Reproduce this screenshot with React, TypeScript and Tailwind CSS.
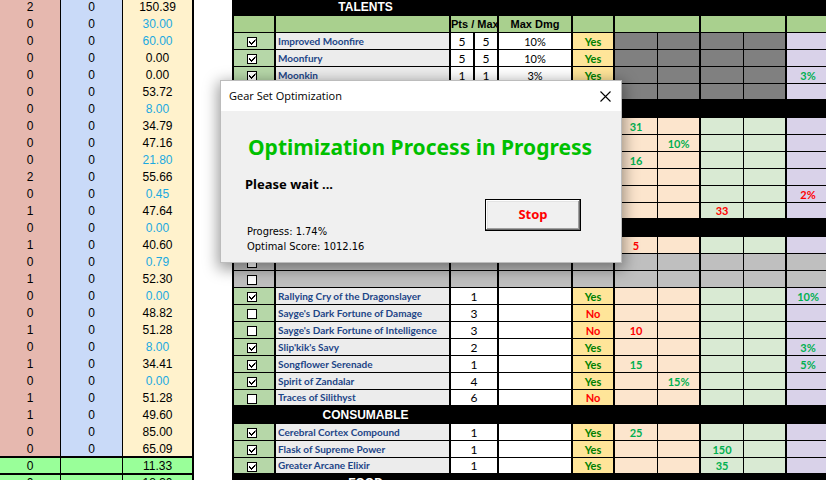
import { useId } from "react";
import { clsx } from "clsx";

type Tone = "good" | "bad";
type Mark = { col: number; text: string; tone: Tone };
type Row = {
  name?: string;
  checked?: boolean;
  pts?: string;
  max?: string;
  dmg?: string;
  on?: "Yes" | "No";
  marks?: Mark[];
  empty?: boolean;
};
type Section = { title: string; header?: boolean; split?: boolean; locked?: boolean; rows: Row[] };

const good = (col: number, text: string): Mark => ({ col, text, tone: "good" });
const bad = (col: number, text: string): Mark => ({ col, text, tone: "bad" });

const SCORES: [string, string, boolean?][] = [
  ["2", "150.39"],
  ["0", "30.00", true],
  ["0", "60.00", true],
  ["0", "0.00"],
  ["0", "0.00"],
  ["0", "53.72"],
  ["0", "8.00", true],
  ["0", "34.79"],
  ["0", "47.16"],
  ["0", "21.80", true],
  ["2", "55.66"],
  ["0", "0.45", true],
  ["1", "47.64"],
  ["0", "0.00", true],
  ["1", "40.60"],
  ["0", "0.79", true],
  ["1", "52.30"],
  ["0", "0.00", true],
  ["0", "48.82"],
  ["1", "51.28"],
  ["0", "8.00", true],
  ["1", "34.41"],
  ["0", "0.00", true],
  ["1", "51.28"],
  ["1", "49.60"],
  ["0", "85.00"],
  ["0", "65.09"],
];

const TOTALS: [string, string][] = [
  ["0", "11.33"],
  ["0", "18.30"],
];

const SECTIONS: Section[] = [
  {
    title: "TALENTS",
    header: true,
    split: true,
    locked: true,
    rows: [
      { name: "Improved Moonfire", checked: true, pts: "5", max: "5", dmg: "10%", on: "Yes" },
      { name: "Moonfury", checked: true, pts: "5", max: "5", dmg: "10%", on: "Yes" },
      { name: "Moonkin", checked: true, pts: "1", max: "1", dmg: "3%", on: "Yes", marks: [good(4, "3%")] },
      {},
    ],
  },
  {
    title: "",
    rows: [
      { marks: [good(0, "31")] },
      { marks: [good(1, "10%")] },
      { marks: [good(0, "16")] },
      {},
      { marks: [bad(4, "2%")] },
      { marks: [bad(2, "33")] },
    ],
  },
  {
    title: "",
    rows: [
      { marks: [bad(0, "5")] },
      { empty: true },
      { empty: true },
      { name: "Rallying Cry of the Dragonslayer", checked: true, max: "1", on: "Yes", marks: [good(4, "10%")] },
      { name: "Sayge's Dark Fortune of Damage", max: "3", on: "No" },
      { name: "Sayge's Dark Fortune of Intelligence", max: "3", on: "No", marks: [bad(0, "10")] },
      { name: "Slip'kik's Savy", checked: true, max: "2", on: "Yes", marks: [good(4, "3%")] },
      { name: "Songflower Serenade", checked: true, max: "1", on: "Yes", marks: [good(0, "15"), good(4, "5%")] },
      { name: "Spirit of Zandalar", checked: true, max: "4", on: "Yes", marks: [good(1, "15%")] },
      { name: "Traces of Silithyst", max: "6", on: "No" },
    ],
  },
  {
    title: "CONSUMABLE",
    rows: [
      { name: "Cerebral Cortex Compound", checked: true, max: "1", on: "Yes", marks: [good(0, "25")] },
      { name: "Flask of Supreme Power", checked: true, max: "1", on: "Yes", marks: [good(2, "150")] },
      { name: "Greater Arcane Elixir", checked: true, max: "1", on: "Yes", marks: [good(2, "35")] },
    ],
  },
  { title: "FOOD", rows: [] },
];

const MARK_COLUMNS = [
  { fill: "bg-[#fce5cd]", edge: "border-r" },
  { fill: "bg-[#fce5cd]", edge: "border-r-2" },
  { fill: "bg-[#d9ead3]", edge: "border-r" },
  { fill: "bg-[#d9ead3]", edge: "border-r-2" },
  { fill: "bg-[#d9d2e9]", edge: "border-r" },
];

function ScoreTable() {
  return (
    <table className="-mt-[3px] w-[194px] shrink-0 table-fixed border-separate border-spacing-0 self-start text-center font-['Liberation_Sans',Arial,sans-serif] text-[12px] leading-[13px] text-black">
      <colgroup>
        <col className="w-[61px]" />
        <col className="w-[62px]" />
        <col className="w-[71px]" />
      </colgroup>
      <tbody>
        {SCORES.map(([count, score, alt], i) => (
          <tr key={i} className="h-[17px]">
            <td className="border-r border-black bg-[#e6b8af] p-0 pt-1">{count}</td>
            <td className="border-r border-black bg-[#c9daf8] p-0 pt-1">0</td>
            <td className={clsx("border-r-2 border-black bg-[#fff2cc] p-0 pt-1", alt && "text-[#1ba9e0]")}>
              {score}
            </td>
          </tr>
        ))}
        {TOTALS.map(([count, score]) => (
          <tr key={score} className="h-[17px] bg-[#99ff99]">
            <td className="border-t-2 border-r border-black p-0 pt-[2px]">{count}</td>
            <td className="border-t-2 border-r border-black p-0" />
            <td className="border-t-2 border-r-2 border-black p-0 pt-[2px]">{score}</td>
          </tr>
        ))}
      </tbody>
    </table>
  );
}

function CheckBox({ id, checked, label }: { id: string; checked?: boolean; label?: string }) {
  return (
    <span className="relative ml-[13px] block size-[10px]">
      <input
        id={id}
        type="checkbox"
        defaultChecked={checked}
        aria-label={label}
        className="peer block size-[10px] appearance-none border border-black bg-white"
      />
      <svg
        viewBox="0 0 10 10"
        className="pointer-events-none absolute inset-0 hidden size-[10px] peer-checked:block"
        aria-hidden="true"
      >
        <path d="M2 4h1v1h1v1h1V5h1V4h1V3h1V2h.5v2H8v1H7v1H6v1H5v1H4V7H3V6H2z" fill="#000" />
      </svg>
    </span>
  );
}

function BuffRow({ row, section, last }: { row: Row; section: Section; last: boolean }) {
  const id = useId();
  const bottom = last ? "border-b-2" : "border-b";
  const cell = clsx("border-black p-0", bottom);
  const plain = row.empty ? "bg-[#bfbfbf]" : "bg-white";
  return (
    <tr className="h-[17px]">
      <td className={clsx(cell, "border-x-2 pt-[2px]", row.empty ? "bg-[#bfbfbf]" : "bg-[#b6d7a8]")}>
        <CheckBox id={id} checked={row.checked} label={row.name ? undefined : "Unused slot"} />
      </td>
      <td
        className={clsx(
          cell,
          "border-r-2 pl-[2px] text-left text-[10px] font-bold whitespace-nowrap text-[#1c4587]",
          row.empty ? "bg-[#bfbfbf]" : "bg-[#ececec]",
        )}
      >
        {row.name && <label htmlFor={id}>{row.name}</label>}
      </td>
      {section.split ? (
        <>
          <td className={clsx(cell, plain, "border-r-2")}>{row.pts}</td>
          <td className={clsx(cell, plain, "border-r-2")}>{row.max}</td>
        </>
      ) : (
        <td colSpan={2} className={clsx(cell, plain, "border-r-2")}>
          {row.max}
        </td>
      )}
      <td className={clsx(cell, plain, "border-r-2 text-[11px]")}>{row.dmg}</td>
      <td
        className={clsx(
          cell,
          "border-r-2 text-[11px] font-bold",
          row.empty ? "bg-[#bfbfbf]" : "bg-[#ffe599]",
          row.on === "No" ? "text-[#ff0000]" : "text-[#008000]",
        )}
      >
        {row.on}
      </td>
      {MARK_COLUMNS.map(({ fill, edge }, col) => {
        const mark = row.marks?.find((m) => m.col === col);
        const background = row.empty ? "bg-[#bfbfbf]" : section.locked && col < 4 ? "bg-[#808080]" : fill;
        return (
          <td
            key={col}
            className={clsx(
              cell,
              edge,
              background,
              "text-[11px] font-bold",
              mark?.tone === "bad" ? "text-[#ff0000]" : "text-[#00b050]",
            )}
          >
            {mark?.text}
          </td>
        );
      })}
    </tr>
  );
}

function HeaderRow() {
  const cell = "border-b border-r-2 border-black p-0";
  return (
    <tr className="h-[17px] bg-[#a9d08e] font-['Liberation_Sans',Arial,sans-serif] text-[11px] text-black">
      <th className={clsx(cell, "border-l-2")} />
      <th className={cell} />
      <th colSpan={2} className={clsx(cell, "overflow-hidden whitespace-nowrap")}>
        Pts / Max
      </th>
      <th className={cell}>Max Dmg</th>
      <th className={cell} />
      <th colSpan={2} className={cell} />
      <th colSpan={2} className={cell} />
      <th className={cell} />
    </tr>
  );
}

function BuffTable() {
  return (
    <table className="-mt-px w-[598px] shrink-0 table-fixed border-separate border-spacing-0 self-start text-center font-[Lato,Carlito,sans-serif] text-[12px] leading-[15px] text-black">
      <colgroup>
        <col className="w-[44px]" />
        <col className="w-[175px]" />
        <col className="w-[24px]" />
        <col className="w-[24px]" />
        <col className="w-[74px]" />
        <col className="w-[42px]" />
        <col className="w-[43px]" />
        <col className="w-[43px]" />
        <col className="w-[43px]" />
        <col className="w-[43px]" />
        <col className="w-[43px]" />
      </colgroup>
      {SECTIONS.map((section, s) => (
        <tbody key={s}>
          <tr className="h-[17px] bg-black font-['Liberation_Sans',Arial,sans-serif] text-white">
            <th colSpan={4} className="p-0">
              {section.title}
            </th>
            <th colSpan={7} className="p-0" />
          </tr>
          {section.header && <HeaderRow />}
          {section.rows.map((row, i) => (
            <BuffRow key={i} row={row} section={section} last={i === section.rows.length - 1} />
          ))}
        </tbody>
      ))}
    </table>
  );
}

function ProgressDialog() {
  return (
    <section
      role="dialog"
      aria-labelledby="dialog-title"
      className="absolute top-[80px] left-[220px] w-[402px] border border-[#bcbcbc] bg-[#f0f0f0] font-['Noto_Sans',Tahoma,sans-serif] text-black shadow-[0_4px_14px_2px_rgba(0,0,0,0.4)]"
    >
      <header className="flex h-[30px] items-center justify-between bg-white pr-[10px] pl-2">
        <h1 id="dialog-title" className="font-['Open_Sans','Segoe_UI',sans-serif] text-[11px] leading-4">
          Gear Set Optimization
        </h1>
        <button type="button" aria-label="Close" className="block">
          <svg viewBox="0 0 11 11" className="size-[11px]" aria-hidden="true">
            <path d="M.5.5l10 10M10.5.5l-10 10" stroke="#000" strokeWidth="1.1" fill="none" />
          </svg>
        </button>
      </header>
      <div className="pt-[22px] pr-10 pb-2 pl-6">
        <h2 className="pl-[3px] text-[21px] leading-7 font-bold whitespace-nowrap text-[#00c000]">
          Optimization Process in Progress
        </h2>
        <p className="mt-[14px] text-[13px] leading-[18px] font-bold">Please wait ...</p>
        <div className="mt-[6px] flex items-end justify-between">
          <p className="pl-[2px] font-['DejaVu_Sans_Condensed',Tahoma,sans-serif] text-[11px] leading-[15px]">
            Progress: 1.74%
            <br />
            Optimal Score: 1012.16
          </p>
          <button
            type="button"
            className="mb-[23px] h-8 w-24 border border-black bg-[#f0f0f0] text-[13px] font-bold text-[#ff0000] shadow-[inset_-1px_-1px_0_#696969,inset_1px_1px_0_#ffffff,inset_-2px_-2px_0_#a0a0a0,inset_2px_2px_0_#e3e3e3]"
          >
            Stop
          </button>
        </div>
      </div>
    </section>
  );
}

export default function App() {
  return (
    <main className="relative flex h-screen gap-[38px] overflow-hidden bg-white">
      <ScoreTable />
      <BuffTable />
      <ProgressDialog />
    </main>
  );
}
